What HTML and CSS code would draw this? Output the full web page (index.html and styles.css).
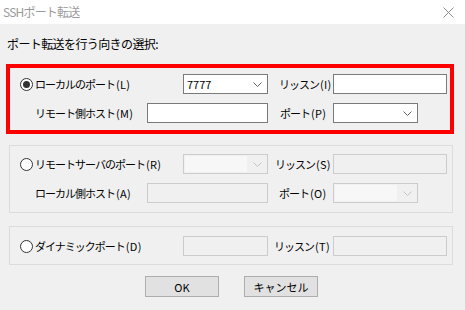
FILE: index.html
```html
<!DOCTYPE html>
<html lang="ja">
<head>
  <meta charset="UTF-8">
  <title>SSHポート転送</title>
  <link rel="stylesheet" href="styles.css">
</head>
<body>
  <div class="window">
    <div class="titlebar">
      <span class="title">SSHポート転送</span>
      <svg class="close" width="11" height="11" viewBox="0 0 11 11">
        <path d="M0.5 0.5 L10.5 10.5 M10.5 0.5 L0.5 10.5" stroke="#8c8c8c" stroke-width="1" fill="none"/>
      </svg>
    </div>

    <div class="content">
      <p class="prompt">ポート転送を行う向きの選択:</p>

      <div class="group highlight">
        <div class="row">
          <label class="radio-cell"><span class="radio checked"></span><span>ローカルのポート<span class="key">(L)</span></span></label>
          <div class="combo w85"><span class="value">7777</span><svg class="chev" width="9" height="5" viewBox="0 0 9 5"><path d="M0.5 0.5 L4.5 4.5 L8.5 0.5" stroke="#606060" fill="none"/></svg></div>
          <span class="label2 pl11">リッスン<span class="key">(I)</span></span>
          <div class="field w114"></div>
        </div>
        <div class="row">
          <span class="sub-label">リモート側ホスト<span class="key">(M)</span></span>
          <div class="field w121"></div>
          <span class="label2 pl12">ポート<span class="key">(P)</span></span>
          <div class="combo w85"><svg class="chev" width="9" height="5" viewBox="0 0 9 5"><path d="M0.5 0.5 L4.5 4.5 L8.5 0.5" stroke="#606060" fill="none"/></svg></div>
        </div>
      </div>

      <div class="group second">
        <div class="row">
          <label class="radio-cell"><span class="radio"></span><span>リモートサーバのポート<span class="key">(R)</span></span></label>
          <div class="combo w85 disabled"><span class="inner"></span><svg class="chev" width="9" height="5" viewBox="0 0 9 5"><path d="M0.5 0.5 L4.5 4.5 L8.5 0.5" stroke="#c4c4c4" fill="none"/></svg></div>
          <span class="label2 pl7">リッスン<span class="key">(S)</span></span>
          <div class="field w114 disabled"></div>
        </div>
        <div class="row">
          <span class="sub-label">ローカル側ホスト<span class="key">(A)</span></span>
          <div class="field w121 disabled"></div>
          <span class="label2 pl11">ポート<span class="key">(O)</span></span>
          <div class="combo w85 disabled"><span class="inner"></span><svg class="chev" width="9" height="5" viewBox="0 0 9 5"><path d="M0.5 0.5 L4.5 4.5 L8.5 0.5" stroke="#c4c4c4" fill="none"/></svg></div>
        </div>
      </div>

      <div class="group third">
        <div class="row">
          <label class="radio-cell"><span class="radio"></span><span>ダイナミックポート<span class="key">(D)</span></span></label>
          <div class="field w85 disabled"></div>
          <span class="label2 pl6">リッスン<span class="key">(T)</span></span>
          <div class="field w114 disabled"></div>
        </div>
      </div>

      <div class="buttons">
        <button class="btn">OK</button>
        <button class="btn">キャンセル</button>
      </div>
    </div>
  </div>
</body>
</html>
```

FILE: styles.css
```css
body {
  margin: 0;
  padding: 0;
  font-family: "Noto Sans CJK JP", "Noto Sans", sans-serif;
  font-size: 11px;
  letter-spacing: -1px;
  color: #000;
  background-color: #f0f0f0;
}
.window {
  width: 465px;
  height: 310px;
  background-color: #f0f0f0;
  overflow: hidden;
}
.titlebar {
  height: 24px;
  background-color: #fff;
  display: flex;
  align-items: center;
  justify-content: space-between;
  padding: 0 11px 0 3px;
  box-sizing: border-box;
}
.title {
  color: #9a9a9a;
  font-size: 12px;
  letter-spacing: -0.8px;
  line-height: 16px;
}
.content {
  padding-top: 12px;
}
.prompt {
  margin: 0 0 12px 7px;
  font-size: 12px;
  letter-spacing: -0.6px;
  line-height: 16px;
}
.key {
  letter-spacing: 0.3px;
  margin-left: 1px;
}
.group {
  margin-left: 9px;
  width: 444px;
  box-sizing: border-box;
  border: 1px solid #dcdcdc;
  padding: 8px 0 9px 10px;
  display: flex;
  flex-direction: column;
  gap: 9px;
}
.group.highlight {
  margin-left: 6px;
  width: 448px;
  border: 4px solid #ff0000;
  padding: 6px 0 7px 10px;
}
.group.second {
  margin-top: 11px;
}
.group.third {
  margin-top: 13px;
  padding: 9px 0 8px 10px;
}
.row {
  display: flex;
  align-items: center;
  height: 20px;
}
.radio-cell {
  width: 163px;
  display: flex;
  align-items: center;
  gap: 2px;
  line-height: 16px;
  white-space: nowrap;
}
.radio {
  width: 11px;
  height: 11px;
  border: 1px solid #333;
  border-radius: 50%;
  background-color: #fff;
  display: flex;
  align-items: center;
  justify-content: center;
  flex: none;
}
.radio.checked::after {
  content: "";
  width: 7px;
  height: 7px;
  border-radius: 50%;
  background-color: #333;
}
.sub-label {
  width: 112px;
  padding-left: 15px;
  line-height: 16px;
  white-space: nowrap;
}
.label2 {
  width: 65px;
  box-sizing: border-box;
  line-height: 16px;
  white-space: nowrap;
}
.pl6 { padding-left: 6px; }
.pl7 { padding-left: 7px; }
.pl11 { padding-left: 11px; }
.pl12 { padding-left: 12px; }
.field,
.combo {
  height: 20px;
  box-sizing: border-box;
  border: 1px solid #7a7a7a;
  background-color: #fff;
  flex: none;
}
.w85 { width: 85px; }
.w114 { width: 114px; }
.w121 { width: 121px; }
.combo {
  display: flex;
  align-items: center;
  padding: 0 5px 0 3px;
}
.combo .value {
  flex: 1;
  line-height: 16px;
  letter-spacing: 0;
}
.combo .inner {
  flex: 1;
}
.combo .chev {
  margin-left: auto;
}
.field.disabled,
.combo.disabled {
  border-color: #cccccc;
  background-color: #f0f0f0;
}
.combo.disabled {
  padding: 1px 5px 1px 1px;
  align-items: stretch;
}
.combo.disabled .inner {
  flex: 0 0 62px;
  background-color: #f7f7f7;
}
.combo.disabled .chev {
  align-self: center;
}
.buttons {
  margin-top: 11px;
  margin-left: 145px;
  display: flex;
  gap: 25px;
}
.btn {
  width: 74px;
  height: 21px;
  padding: 0;
  border: 1px solid #adadad;
  background-color: #e1e1e1;
  font-family: inherit;
  font-size: 11px;
  letter-spacing: 0;
  color: #000;
  line-height: 16px;
}
```
